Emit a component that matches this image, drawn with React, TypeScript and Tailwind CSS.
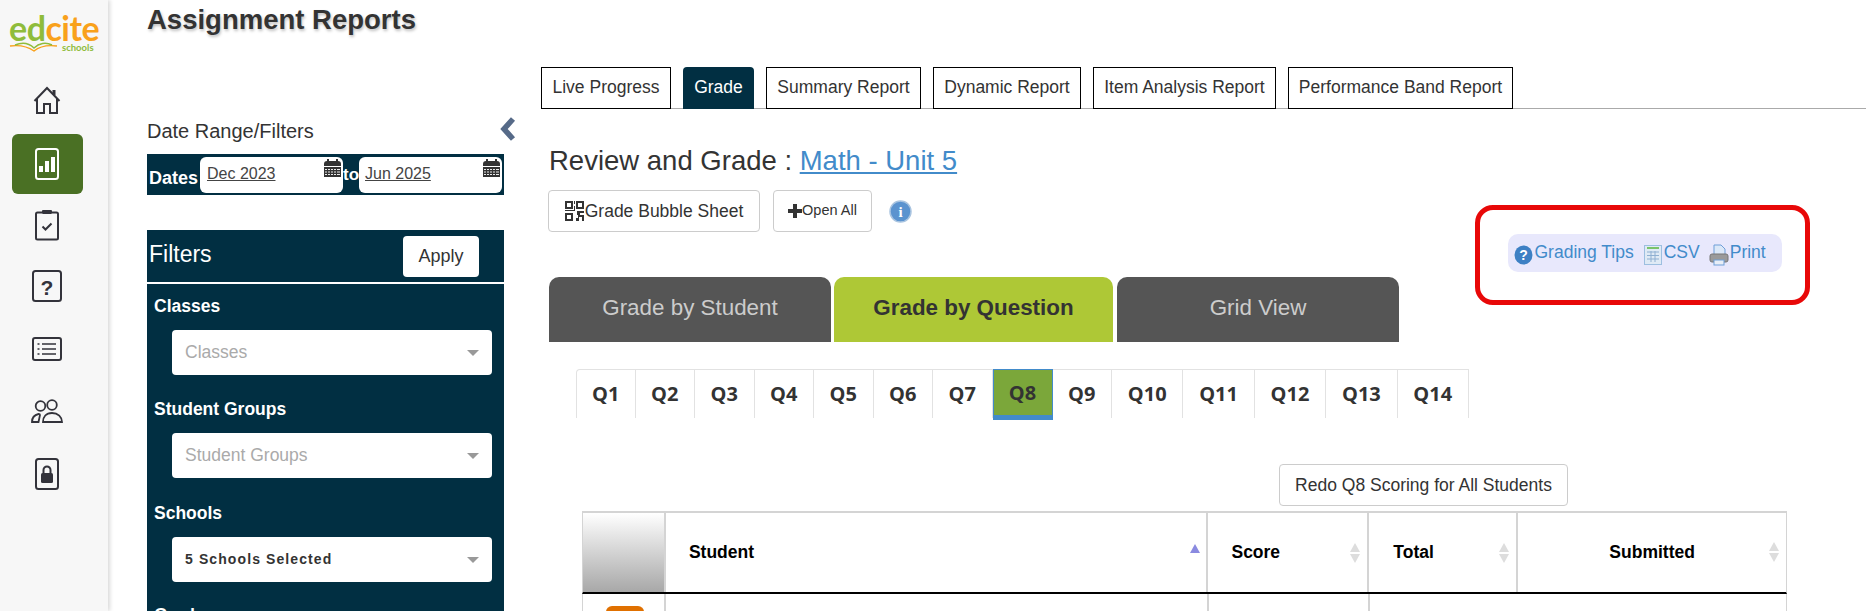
import { ReactNode } from 'react'

const navTabs = [
  { label: 'Live Progress', width: 'w-[130px]' },
  { label: 'Grade', width: 'w-[71px]', active: true },
  { label: 'Summary Report', width: 'w-[155px]' },
  { label: 'Dynamic Report', width: 'w-[148px]' },
  { label: 'Item Analysis Report', width: 'w-[183px]' },
  { label: 'Performance Band Report', width: 'w-[225px]' },
]

const questions = ['Q1', 'Q2', 'Q3', 'Q4', 'Q5', 'Q6', 'Q7', 'Q8', 'Q9', 'Q10', 'Q11', 'Q12', 'Q13', 'Q14']

const HomeIcon = () => (
  <svg width="28" height="28" viewBox="0 0 28 28" fill="none" stroke="#33333b" strokeWidth="2">
    <path d="M1.500 15 14 2l12.500 13" />
    <path d="M21 4v5" strokeWidth="3" />
    <path d="M4 12.500V27h7v-9h6v9h7V12.500" />
  </svg>
)

const ReportIcon = () => (
  <svg width="24" height="32" viewBox="0 0 24 32" fill="none">
    <rect x="1" y="1" width="22" height="30" rx="2.500" stroke="#fff" strokeWidth="2" />
    <rect x="4" y="18" width="4" height="6" fill="#fff" />
    <rect x="10" y="13" width="4" height="11" fill="#fff" />
    <rect x="16" y="9" width="4" height="15" fill="#fff" />
  </svg>
)

const ClipboardIcon = () => (
  <svg width="24" height="32" viewBox="0 0 24 32" fill="none" stroke="#33333b" strokeWidth="2">
    <path d="M7 3.500H2.500a1.500 1.500 0 0 0-1.500 1.500v24a1.500 1.500 0 0 0 1.500 1.500h19a1.500 1.500 0 0 0 1.500-1.500V5a1.500 1.500 0 0 0-1.500-1.500H17" />
    <rect x="7" y="1" width="10" height="4" rx="1" fill="#33333b" stroke="none" />
    <path d="m7.500 17.500 3 3 6-6" />
  </svg>
)

const QuestionIcon = () => (
  <svg width="30" height="32" viewBox="0 0 30 32" fill="none">
    <rect x="1" y="1" width="28" height="30" rx="2.500" stroke="#33333b" strokeWidth="2" />
    <text x="15" y="25" textAnchor="middle" fontSize="21" fontWeight="700" fill="#33333b" fontFamily="'Liberation Sans', sans-serif">?</text>
  </svg>
)

const ListIcon = () => (
  <svg width="30" height="24" viewBox="0 0 30 24" fill="none" stroke="#33333b" strokeWidth="1.600">
    <rect x="1" y="1" width="28" height="22" rx="2" strokeWidth="2" />
    <path d="M10 7h14M10 12h14M10 17h14" />
    <path d="M5.500 7h2M5.500 12h2M5.500 17h2" />
  </svg>
)

const UsersIcon = () => (
  <svg width="32" height="24" viewBox="0 0 32 24" fill="none" stroke="#33333b" strokeWidth="1.800">
    <circle cx="9.500" cy="7" r="4.800" />
    <circle cx="21" cy="6" r="4.800" />
    <path d="M1 23c0-4 2-7 6.500-8 1 0 1.500.3 1.500 1l-1.500 7z" />
    <path d="M12 23c0-5 3-9 9-9s10 4 10 9z" />
  </svg>
)

const LockIcon = () => (
  <svg width="24" height="32" viewBox="0 0 24 32" fill="none">
    <rect x="1" y="1" width="22" height="30" rx="2.500" stroke="#33333b" strokeWidth="2" />
    <path d="M8.500 15v-3a3.500 3.500 0 0 1 7 0v3" stroke="#33333b" strokeWidth="2" />
    <rect x="6" y="15" width="12" height="10" rx="1.500" fill="#33333b" />
  </svg>
)

const CalendarIcon = () => (
  <svg width="17" height="19" viewBox="0 0 17 19" className="absolute right-[2px] top-[2px]">
    <path d="M3 2h11a3 3 0 0 1 3 3v2H0V5a3 3 0 0 1 3-3z" fill="#333" />
    <rect x="3" y="0" width="2" height="3" fill="#333" />
    <rect x="12" y="0" width="2" height="3" fill="#333" />
    <rect x="0" y="8" width="17" height="10" fill="#333" />
    <path d="M1 10.500h15M1 13h15M1 15.500h15" stroke="#fff" strokeWidth="0.900" />
    <path d="M3.500 8v10M6.500 8v10M9.500 8v10M12.500 8v10" stroke="#333" strokeWidth="1" />
  </svg>
)

const SelectBox = ({ text, selected }: { text: string; selected?: boolean }) => (
  <div className="ml-[25px] mt-[13px] flex h-[45px] w-[320px] items-center justify-between rounded-[4px] bg-white pl-[13px] pr-[13px]">
    {selected ? (
      <span className="text-[14px] font-bold tracking-[1.100px] text-[#333]">{text}</span>
    ) : (
      <span className="text-[17.500px] text-[#aaa]">{text}</span>
    )}
    <span className="h-0 w-0 border-x-[6px] border-t-[6px] border-x-transparent border-t-[#999]" />
  </div>
)

const FilterGroup = ({ label, children }: { label: string; children?: ReactNode }) => (
  <div className="pl-[7px]">
    <div className="text-[17.500px] leading-[22px] font-bold text-white">{label}</div>
    <div className="-ml-[7px]">{children}</div>
  </div>
)

const SortArrows = () => (
  <span className="flex flex-col items-center gap-[2px]">
    <span className="h-0 w-0 border-x-[5px] border-b-[9px] border-x-transparent border-b-[#ddd]" />
    <span className="h-0 w-0 border-x-[5px] border-t-[9px] border-x-transparent border-t-[#ddd]" />
  </span>
)

export default function App() {
  return (
    <div className="flex h-[611px] w-full overflow-hidden bg-white font-['Liberation_Sans',sans-serif]">
      {/* Side nav */}
      <aside className="flex w-[108px] shrink-0 flex-col items-center bg-[#f7f7f7] pr-[14px] shadow-[2px_0_4px_rgba(0,0,0,0.15)]">
        <div className="relative h-[70px] w-[94px]">
          <div className="absolute left-[9px] top-[14px] font-['Lato',sans-serif] text-[34px] leading-[28px] font-bold tracking-[-0.500px]">
            <span className="text-[#8fbc3b]">ed</span>
            <span className="text-[#f9a11b]">cite</span>
          </div>
          <svg width="50" height="10" viewBox="0 0 50 10" className="absolute left-[9px] top-[42px]" fill="none" strokeWidth="1.400">
            <path d="M1 4c8-1 17 0 24 5 6-5 15-6 23-5" stroke="#f9a11b" />
            <path d="M6 3c7-3 14-2 19 3 5-5 12-6 18-3" stroke="#8fbc3b" />
          </svg>
          <span className="absolute left-[62px] top-[42px] font-['Lato',sans-serif] text-[9.500px] leading-[11px] font-bold text-[#8fbc3b]">schools</span>
        </div>
        <div className="flex h-[60px] items-center"><HomeIcon /></div>
        <div className="mt-[4px] flex h-[60px] w-[71px] items-center justify-center rounded-[6px] bg-[#4a7024]"><ReportIcon /></div>
        <div className="flex h-[62px] items-center"><ClipboardIcon /></div>
        <div className="flex h-[60px] items-center"><QuestionIcon /></div>
        <div className="mt-[3px] flex h-[60px] items-center"><ListIcon /></div>
        <div className="mt-[2px] flex h-[60px] items-center"><UsersIcon /></div>
        <div className="mt-[3px] flex h-[60px] items-center"><LockIcon /></div>
      </aside>

      <main className="min-w-0 flex-1">
        <h1 className="ml-[39px] h-[67px] pt-[3px] text-[27.500px] leading-[34px] font-bold text-[#333] [text-shadow:1px_2px_3px_rgba(0,0,0,0.25)]">
          Assignment Reports
        </h1>

        <div className="flex">
          {/* Filter column */}
          <div className="relative ml-[39px] w-[357px] shrink-0 pt-[52px]">
            <div className="text-[20px] leading-[24px] text-[#333]">Date Range/Filters</div>
            <svg width="16" height="24" viewBox="0 0 16 24" className="absolute left-[353px] top-[50px]">
              <path d="M13 2 4 12l9 10" fill="none" stroke="#566a88" strokeWidth="5.500" />
            </svg>
            <div className="mt-[11px] flex h-[41px] items-center bg-[#012f42] pl-[2px]">
              <span className="mt-[8px] w-[51px] text-[18px] font-bold text-white">Dates</span>
              <div className="relative flex h-[36px] w-[143px] rounded-[6px] bg-white pl-[7px] pt-[6px]">
                <span className="text-[16px] leading-[22px] text-[#444] underline">Dec 2023</span>
                <CalendarIcon />
              </div>
              <span className="w-[16px] text-center text-[17px] font-bold text-white">to</span>
              <div className="relative flex h-[36px] w-[143px] rounded-[6px] bg-white pl-[6px] pt-[6px]">
                <span className="text-[16px] leading-[22px] text-[#444] underline">Jun 2025</span>
                <CalendarIcon />
              </div>
            </div>

            <div className="mt-[35px] flex h-[52px] items-center justify-between bg-[#012f42] pl-[2px] pr-[25px]">
              <span className="mb-[4px] text-[23px] text-white">Filters</span>
              <button className="h-[41px] w-[76px] rounded-[4px] bg-white text-[18px] text-[#333]">Apply</button>
            </div>
            <div className="mt-[2px] h-[400px] bg-[#012f42] pt-[11px]">
              <FilterGroup label="Classes"><SelectBox text="Classes" /></FilterGroup>
              <div className="mt-[23px]"><FilterGroup label="Student Groups"><SelectBox text="Student Groups" /></FilterGroup></div>
              <div className="mt-[24px]"><FilterGroup label="Schools"><SelectBox text="5 Schools Selected" selected /></FilterGroup></div>
              <div className="mt-[22px]"><FilterGroup label="Grades" /></div>
            </div>
          </div>

          {/* Report column */}
          <div className="relative ml-[32px] min-w-0 flex-1">
            <div className="ml-[5px] flex h-[42px] gap-[12px] border-b border-b-[#aaa]">
              {navTabs.map((tab) => (
                <div
                  key={tab.label}
                  className={
                    tab.active
                      ? `flex h-[42px] items-center justify-center rounded-t-[4px] bg-[#012f42] pb-[2px] text-[17.500px] text-white ${tab.width}`
                      : `flex h-[42px] items-center justify-center border border-black bg-white pb-[2px] text-[17.500px] text-[#333] ${tab.width}`
                  }
                >
                  {tab.label}
                </div>
              ))}
            </div>

            <div className="ml-[13px] mt-[37px] text-[27.500px] leading-[30px] text-[#333]">
              Review and Grade : <a className="text-[#428bca] underline">Math - Unit 5</a>
            </div>

            <div className="ml-[12px] mt-[14px] flex items-center">
              <button className="flex h-[42px] w-[212px] items-center justify-center rounded-[4px] border border-[#ccc] text-[17.500px] text-[#333]">
                <svg width="19" height="21" viewBox="0 0 19 21" className="mr-[1px]" fill="#333">
                  <path d="M0 0h8v8H0zM2 2v4h4V2zM11 0h8v8h-8zM13 2v4h4V2zM0 12h8v8H0zM2 14v4h4v-4z" fillRule="evenodd" />
                  <path d="M9 0h1v3H9zM9 5h1v5H0V9h9zM12 10h7v2h-4v2h4v6h-2v-4h-3v4h-3v-3h2v-3h-1z" />
                </svg>
                Grade Bubble Sheet
              </button>
              <button className="ml-[13px] flex h-[42px] w-[99px] items-center justify-center rounded-[4px] border border-[#ccc] text-[14.500px] text-[#333]">
                <svg width="14" height="14" viewBox="0 0 14 14" fill="#333"><path d="M5 0h4v5h5v4H9v5H5V9H0V5h5z" /></svg>
                Open All
              </button>
              <svg width="23" height="23" viewBox="0 0 23 23" className="ml-[17px]">
                <circle cx="11.500" cy="11.500" r="10.500" fill="#5b93cf" stroke="#a9c4e0" strokeWidth="1.500" />
                <text x="11.500" y="17" textAnchor="middle" fontSize="15" fontWeight="700" fill="#fff" fontFamily="'Liberation Serif', serif">i</text>
              </svg>
            </div>

            <div className="ml-[13px] mt-[45px] flex h-[65px] gap-[3px]">
              <div className="flex w-[282px] items-center justify-center rounded-t-[10px] bg-[#555] pb-[4px] text-[22.400px] text-[#ccc]">Grade by Student</div>
              <div className="flex w-[279px] items-center justify-center rounded-t-[10px] bg-[#aec836] pb-[4px] text-[22.400px] font-bold text-[#333]">Grade by Question</div>
              <div className="ml-[1px] flex w-[282px] items-center justify-center rounded-t-[10px] bg-[#555] pb-[4px] text-[22.400px] text-[#ccc]">Grid View</div>
            </div>

            <div className="ml-[40px] mt-[27px] flex h-[51px] items-start font-['Open_Sans',sans-serif]">
              {questions.map((q) => (
                <div
                  key={q}
                  className={
                    q === 'Q8'
                      ? 'flex h-[51px] w-[60px] items-center justify-center border border-b-[5px] border-[#428bca] bg-[#7ba73a] text-[20px] font-bold text-[#333]'
                      : `flex h-[49px] items-center justify-center border-r border-t border-[#e2e2e2] text-[20px] font-bold text-[#333] first:rounded-tl-[4px] first:border-l ${q.length > 2 ? 'w-[71.400px]' : 'w-[59.500px]'}`
                  }
                >
                  {q}
                </div>
              ))}
            </div>

            <div className="ml-[743px] mt-[44px] flex h-[42px] w-[289px] items-center justify-center rounded-[4px] border border-[#ccc] text-[17.500px] text-[#333]">
              Redo Q8 Scoring for All Students
            </div>

            <div className="ml-[46px] mt-[5px] flex h-[83px] w-[1205px] border-b-2 border-l border-r border-t-2 border-b-black border-x-[#d4d4d4] border-t-[#d4d4d4] text-[17.500px] font-bold text-black">
              <div className="w-[81px] bg-gradient-to-b from-white to-[#a8a8a8]" />
              <div className="relative flex w-[543px] items-center border-l-2 border-[#d4d4d4] pl-[23px]">
                Student
                <span className="absolute right-[6px] top-[31px] h-0 w-0 border-x-[5px] border-b-[9px] border-x-transparent border-b-[#8a8ae0]" />
              </div>
              <div className="flex w-[161px] items-center justify-between border-l-2 border-[#d4d4d4] pl-[23px] pr-[7px]">Score<SortArrows /></div>
              <div className="flex w-[149px] items-center justify-between border-l-2 border-[#d4d4d4] pl-[24px] pr-[7px]">Total<SortArrows /></div>
              <div className="relative flex w-[270px] items-center justify-center border-l-2 border-[#d4d4d4]">
                Submitted
                <span className="absolute right-[7px] top-[29px]"><SortArrows /></span>
              </div>
            </div>

            <div className="ml-[46px] flex h-[20px] w-[1205px] border-x border-[#d4d4d4]">
              <div className="w-[81px] pl-[23px] pt-[12px]"><div className="h-[8px] w-[38px] rounded-t-[6px] bg-[#e07000]" /></div>
              <div className="w-[543px] border-l-2 border-[#d4d4d4]" />
              <div className="w-[161px] border-l-2 border-[#d4d4d4]" />
              <div className="w-[149px] border-l-2 border-[#d4d4d4]" />
            </div>

            {/* Red annotation around the report links */}
            <div className="absolute left-[939px] top-[138px] flex h-[100px] w-[335px] items-center justify-center rounded-[18px] border-[5px] border-[#e80808]">
              <div className="mb-[4px] ml-[4px] flex h-[38px] w-[274px] items-center rounded-[10px] bg-[#e8e8fc] pl-[6px] text-[17.500px] text-[#428bca]">
                <svg width="19" height="20" viewBox="0 0 19 20" className="mt-[3px]">
                  <ellipse cx="9.500" cy="10" rx="9" ry="9.500" fill="#3d80c4" />
                  <text x="9.500" y="15" textAnchor="middle" fontSize="14" fontWeight="700" fill="#fff">?</text>
                </svg>
                <span className="ml-[2px] -mt-[2px]">Grading Tips</span>
                <svg width="18" height="20" viewBox="0 0 18 20" className="ml-[10px] mt-[3px]" fill="none">
                  <rect x="0.500" y="0.500" width="17" height="19" fill="#dfeaf5" stroke="#9dbfe0" />
                  <path d="M3 3h12" stroke="#7ac36a" strokeWidth="2" />
                  <path d="M3 7h12M3 10.500h12M3 14h12M7 6v11M11 6v11" stroke="#8fb0d2" />
                </svg>
                <span className="ml-[2px] -mt-[2px]">CSV</span>
                <svg width="20" height="22" viewBox="0 0 20 22" className="ml-[9px] mt-[3px]" fill="none">
                  <path d="M5 1h7l4 4v7H5z" fill="#dbe8f8" stroke="#6f9fd8" />
                  <rect x="1" y="10" width="18" height="8" rx="2" fill="#9a9a9a" stroke="#777" />
                  <rect x="5" y="16" width="10" height="5" fill="#e8eef6" stroke="#6f9fd8" />
                </svg>
                <span className="ml-[1px] -mt-[2px]">Print</span>
              </div>
            </div>
          </div>
        </div>
      </main>
    </div>
  )
}
